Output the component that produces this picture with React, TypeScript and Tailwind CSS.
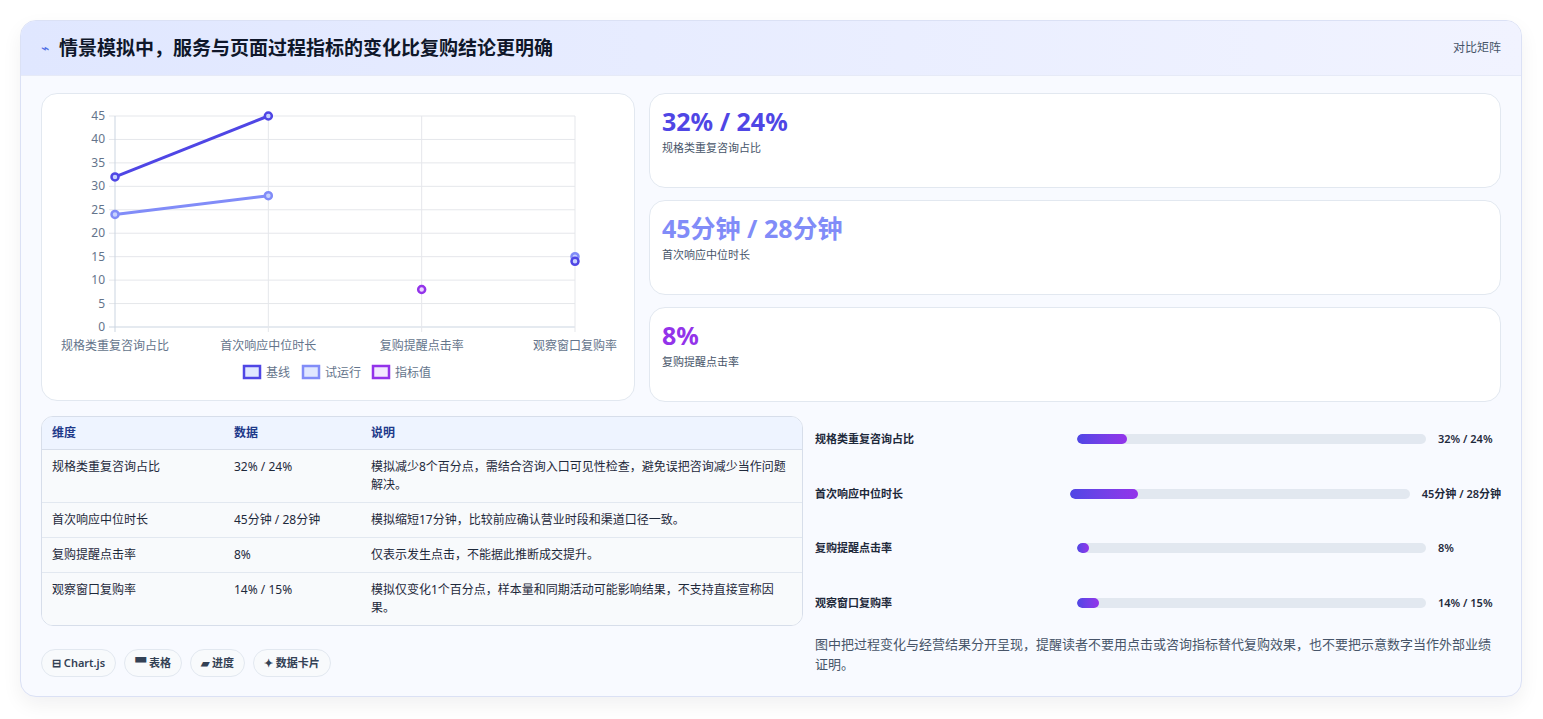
import React from 'react';

const font = { fontFamily: '"Noto Sans", "Noto Sans CJK SC", sans-serif' };

const stats = [
  { v: '32% / 24%', l: '规格类重复咨询占比', c: 'text-[#4f46e5]' },
  { v: '45分钟 / 28分钟', l: '首次响应中位时长', c: 'text-[#818cf8]' },
  { v: '8%', l: '复购提醒点击率', c: 'text-[#9333ea]' },
];

const rows = [
  { d: '规格类重复咨询占比', v: '32% / 24%', n: '模拟减少8个百分点，需结合咨询入口可见性检查，避免误把咨询减少当作问题解决。', p: 14.5 },
  { d: '首次响应中位时长', v: '45分钟 / 28分钟', n: '模拟缩短17分钟，比较前应确认营业时段和渠道口径一致。', p: 20 },
  { d: '复购提醒点击率', v: '8%', n: '仅表示发生点击，不能据此推断成交提升。', p: 3.6 },
  { d: '观察窗口复购率', v: '14% / 15%', n: '模拟仅变化1个百分点，样本量和同期活动可能影响结果，不支持直接宣称因果。', p: 6.4 },
];

function Chart() {
  const x0 = 73, x1 = 533, yTop = 22, yBot = 233;
  const xs = [0, 1, 2, 3].map((i) => x0 + ((x1 - x0) / 3) * i);
  const y = (v: number) => yBot - ((yBot - yTop) / 45) * v;
  const ticks = [0, 5, 10, 15, 20, 25, 30, 35, 40, 45];
  const labels = ['规格类重复咨询占比', '首次响应中位时长', '复购提醒点击率', '观察窗口复购率'];
  return (
    <svg width="594" height="308" viewBox="0 0 594 308" style={font}>
      {ticks.map((t) => (
        <g key={t}>
          <line x1={x0 - 6} x2={x1} y1={y(t)} y2={y(t)} stroke={t === 0 ? '#cbd5e1' : '#e5e7eb'} />
          <text x={x0 - 10} y={y(t) + 4} textAnchor="end" fontSize="12" fill="#64748b">{t}</text>
        </g>
      ))}
      {xs.map((x, i) => (
        <g key={i}>
          <line x1={x} x2={x} y1={yTop} y2={yBot + 5} stroke={i === 0 ? '#cbd5e1' : '#e5e7eb'} />
          <text x={x} y={yBot + 23} textAnchor="middle" fontSize="12" fill="#64748b">{labels[i]}</text>
        </g>
      ))}
      <polyline points={`${xs[0]},${y(32)} ${xs[1]},${y(45)}`} fill="none" stroke="#4f46e5" strokeWidth="3" />
      <polyline points={`${xs[0]},${y(24)} ${xs[1]},${y(28)}`} fill="none" stroke="#818cf8" strokeWidth="3" />
      {[[0, 24], [1, 28], [3, 15]].map(([i, v]) => (
        <circle key={'b' + i} cx={xs[i]} cy={y(v)} r="3.5" fill="#c7d2fe" stroke="#818cf8" strokeWidth="2.5" />
      ))}
      {[[0, 32], [1, 45], [3, 14]].map(([i, v]) => (
        <circle key={'a' + i} cx={xs[i]} cy={y(v)} r="3.5" fill="#c7d2fe" stroke="#4f46e5" strokeWidth="2.5" />
      ))}
      <circle cx={xs[2]} cy={y(8)} r="3.5" fill="#e9d5ff" stroke="#9333ea" strokeWidth="2.5" />
      {[
        { x: 202, t: '基线', c: '#4f46e5', f: '#e0e7ff' },
        { x: 261, t: '试运行', c: '#818cf8', f: '#e0e7ff' },
        { x: 331, t: '指标值', c: '#9333ea', f: '#f3e8ff' },
      ].map((l) => (
        <g key={l.t}>
          <rect x={l.x} y={272} width="16" height="12" fill={l.f} stroke={l.c} strokeWidth="2.5" />
          <text x={l.x + 22} y={283} fontSize="12" fill="#64748b">{l.t}</text>
        </g>
      ))}
    </svg>
  );
}

export default function App() {
  return (
    <div className="min-h-[719px] bg-white px-5 pt-5" style={font}>
      <div className="w-[1502px] h-[677px] rounded-2xl border border-[#dbe1f5] bg-[#f8faff] overflow-hidden shadow-[0_8px_20px_rgba(15,23,42,0.06)]">
        <div className="h-[55px] flex items-center justify-between px-5 bg-gradient-to-r from-[#e0e7ff] to-[#f1f3ff] border-b border-[#e6eaf7]">
          <div className="flex items-center gap-2.5">
            <span className="text-[#4f6ee5] text-sm">⌁</span>
            <h1 className="text-[19px] font-bold text-[#0f172a]">情景模拟中，服务与页面过程指标的变化比复购结论更明确</h1>
          </div>
          <span className="text-[12px] text-[#475569]">对比矩阵</span>
        </div>
        <div className="px-5 pt-[17px] grid grid-cols-[594px_1fr] gap-[14px]">
          <div className="h-[308px] rounded-2xl border border-[#e2e8f0] bg-white overflow-hidden">
            <Chart />
          </div>
          <div className="flex flex-col gap-3">
            {stats.map((s) => (
              <div key={s.l} className="h-[95px] rounded-2xl border border-[#e2e8f0] bg-white px-3 pt-2.5">
                <div className={`text-[25px] font-bold leading-[34px] ${s.c}`}>{s.v}</div>
                <div className="text-[11px] text-[#475569] mt-0.5">{s.l}</div>
              </div>
            ))}
          </div>
        </div>
        <div className="px-5 pt-[14px] grid grid-cols-[762px_1fr] gap-3">
          <div>
            <div className="rounded-xl border border-[#d7deea] bg-white overflow-hidden text-[12px] text-[#1e293b]">
              <div className="grid grid-cols-[182px_137px_1fr] h-[33px] items-center px-2.5 bg-[#eef4ff] border-b border-[#d7deea] font-semibold text-[#1e3a8a]">
                <span>维度</span><span>数据</span><span>说明</span>
              </div>
              {rows.map((r, i) => (
                <div key={r.d} className={`grid grid-cols-[182px_137px_1fr] px-2.5 py-[8px] leading-[18px] bg-[#f8fafc] ${i < 3 ? 'border-b border-[#e2e8f0]' : ''}`}>
                  <span>{r.d}</span><span>{r.v}</span><span>{r.n}</span>
                </div>
              ))}
            </div>
            <div className="flex gap-2 mt-[23px]">
              {['⊟ Chart.js', '▀ 表格', '▰ 进度', '✦ 数据卡片'].map((t) => (
                <span key={t} className="h-[28px] px-2.5 flex items-center rounded-full border border-[#e2e8f0] bg-[#f8fafc] text-[11px] font-semibold text-[#334155]">{t}</span>
              ))}
            </div>
          </div>
          <div className="-mt-1">
            {rows.map((r) => (
              <div key={r.d} className="grid grid-cols-[1fr_1.4fr_auto] gap-3 items-center h-[54.5px] text-[11px] font-semibold text-[#1e293b]">
                <span>{r.d}</span>
                <div className="h-[10px] rounded-full bg-[#e2e8f0] overflow-hidden">
                  <div className="h-full rounded-full bg-gradient-to-r from-[#4f46e5] to-[#9333ea]" style={{ width: `${Math.max(r.p, 3.6)}%` }} />
                </div>
                <span className="min-w-[63px] whitespace-nowrap">{r.v}</span>
              </div>
            ))}
            <p className="mt-1 text-[13px] leading-[20px] text-[#475569]">图中把过程变化与经营结果分开呈现，提醒读者不要用点击或咨询指标替代复购效果，也不要把示意数字当作外部业绩证明。</p>
          </div>
        </div>
      </div>
    </div>
  );
}
